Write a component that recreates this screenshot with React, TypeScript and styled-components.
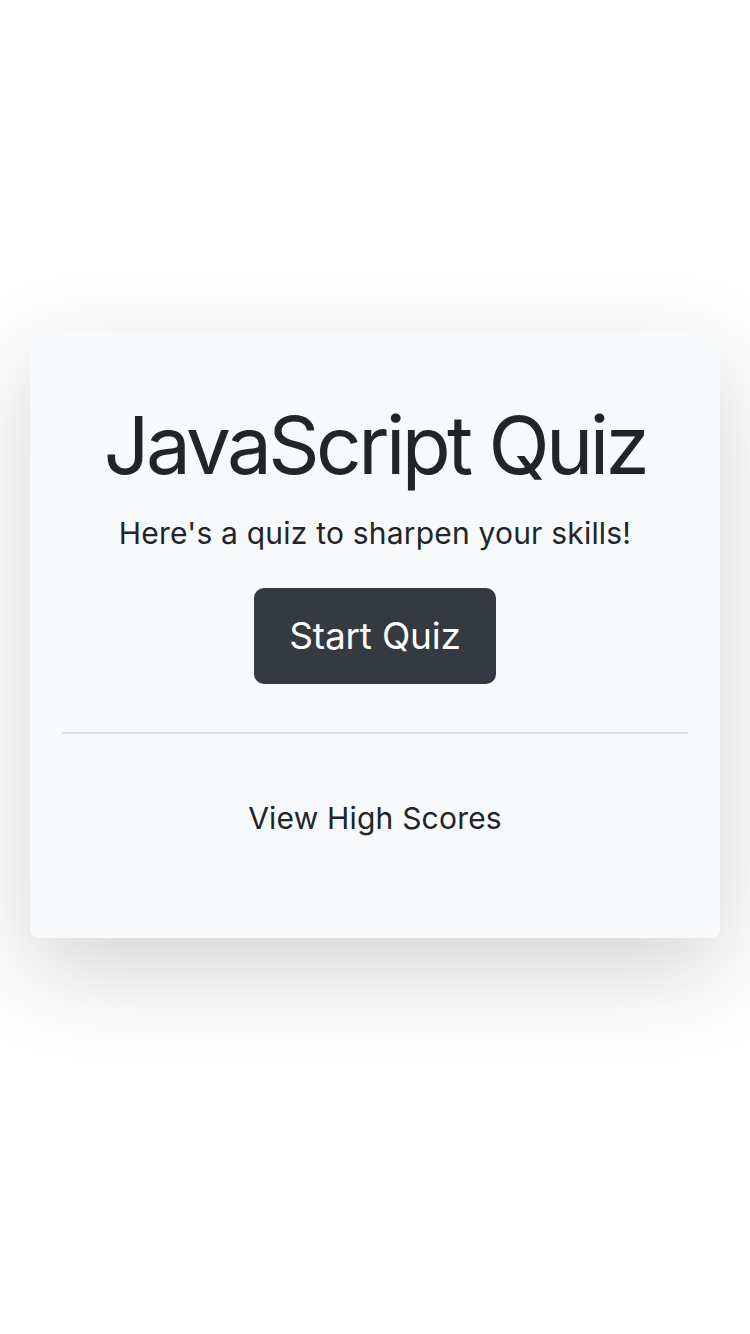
import React from "react";
import styled, { createGlobalStyle } from "styled-components";

const GlobalStyle = createGlobalStyle`
    html, body {
        margin: 0;
        padding: 0;
        background: #ffffff;
    }

    body {
        font-family: Inter, "Liberation Sans", Arial, sans-serif;
        color: #212529;
    }
`;

const SPage = styled.div`
    width: 750px;
    min-height: 1334px;
    padding-top: 332px;
    box-sizing: border-box;
`;

const SCard = styled.div`
    width: 690px;
    margin: 0 auto;
    box-sizing: border-box;
    padding: 65px 32px 97px;
    background: #f8f9fa;
    border-radius: 9px;
    box-shadow: 0 32px 96px rgba(0, 0, 0, 0.175);
    display: flex;
    flex-direction: column;
    align-items: center;
    text-align: center;
`;

const STitle = styled.h1`
    margin: 0;
    font-size: 80px;
    line-height: 96px;
    font-weight: 400;
    letter-spacing: -3.6px;
`;

const SLead = styled.p`
    margin: 18px 0 0;
    font-size: 30px;
    line-height: 45px;
    font-weight: 400;
    letter-spacing: 0.2px;
`;

const SButton = styled.button`
    margin-top: 32px;
    width: 242px;
    height: 96px;
    padding: 0;
    border: 2px solid #343a40;
    border-radius: 10px;
    background: #343a40;
    color: #ffffff;
    font-family: inherit;
    font-size: 37px;
    line-height: 60px;
    letter-spacing: -0.2px;
    cursor: pointer;
`;

const SDivider = styled.hr`
    align-self: stretch;
    margin: 48px 0 0;
    border: 0;
    border-top: 2px solid rgba(0, 0, 0, 0.1);
`;

const SLink = styled.a`
    margin-top: 62px;
    font-size: 30px;
    line-height: 45px;
    letter-spacing: 0.2px;
    color: #212529;
    text-decoration: none;
    cursor: pointer;
`;

function App() {
    return (
        <>
            <GlobalStyle />
            <SPage>
                <SCard>
                    <STitle>JavaScript Quiz</STitle>
                    <SLead>Here's a quiz to sharpen your skills!</SLead>
                    <SButton type="button">Start Quiz</SButton>
                    <SDivider />
                    <SLink>View High Scores</SLink>
                </SCard>
            </SPage>
        </>
    );
}

export default App;
